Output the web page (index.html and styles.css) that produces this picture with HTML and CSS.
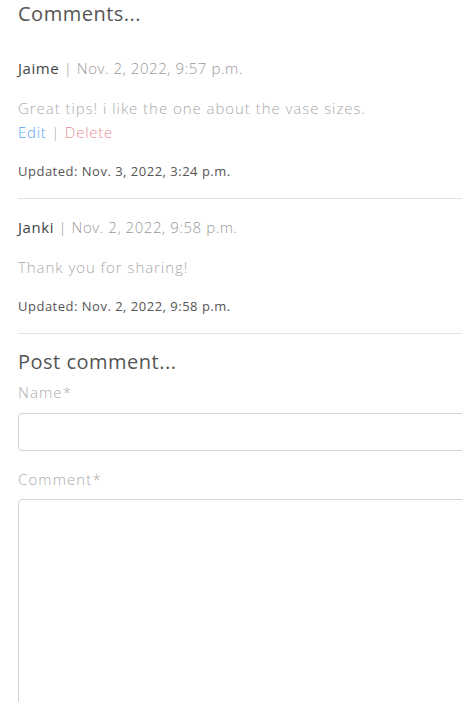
FILE: index.html
```html
<!DOCTYPE html>
<html lang="en">
<head>
<meta charset="utf-8">
<title>Comments</title>
<link rel="stylesheet" href="styles.css">
</head>
<body>
<div class="page">
  <h3 class="section-title">Comments...</h3>
  <div class="comments">
    <div class="comment">
      <p class="comment-meta"><span class="author">Jaime</span> | Nov. 2, 2022, 9:57 p.m.</p>
      <div class="comment-body">
        <p class="comment-text">Great tips! i like the one about the vase sizes.</p>
        <p class="comment-actions"><a class="edit" href="#">Edit</a> | <a class="delete" href="#">Delete</a></p>
      </div>
      <p class="updated">Updated: Nov. 3, 2022, 3:24 p.m.</p>
    </div>
    <hr class="divider">
    <div class="comment">
      <p class="comment-meta"><span class="author">Janki</span> | Nov. 2, 2022, 9:58 p.m.</p>
      <div class="comment-body">
        <p class="comment-text">Thank you for sharing!</p>
      </div>
      <p class="updated">Updated: Nov. 2, 2022, 9:58 p.m.</p>
    </div>
    <hr class="divider">
  </div>
  <form class="comment-form">
    <h3 class="section-title form-title">Post comment...</h3>
    <label class="field-label" for="name">Name*</label>
    <input class="field-input" id="name" type="text">
    <label class="field-label comment-label" for="body">Comment*</label>
    <textarea class="field-input field-textarea" id="body"></textarea>
  </form>
</div>
</body>
</html>
```
FILE: styles.css
```css
html, body {
  margin: 0;
  padding: 0;
  background: #fff;
  overflow: hidden;
}
body {
  font-family: "Open Sans", "DejaVu Sans", sans-serif;
  font-weight: 300;
  font-size: 15px;
  letter-spacing: 0.75px;
  color: #999;
}
.page {
  width: 480px;
  padding-left: 18px;
  box-sizing: border-box;
}
p { margin: 0; }
.section-title {
  margin: 0;
  font-size: 20px;
  line-height: 28px;
  font-weight: 400;
  letter-spacing: 0.5px;
  color: #555;
}
.comments {
  margin-top: 28px;
}
.comment-meta {
  line-height: 24px;
  letter-spacing: 0.55px;
  color: #999;
}
.author {
  font-weight: 400;
  color: #444;
}
.comment-body {
  margin-top: 16px;
}
.comment-text {
  line-height: 24px;
  letter-spacing: 0.95px;
  color: #aaa;
}
.comment-actions {
  line-height: 24px;
  color: #aaa;
}
.edit { color: #5aa6f4; text-decoration: none; }
.delete { color: #ea8f9a; text-decoration: none; }
.updated {
  margin-top: 17px;
  font-size: 13px;
  line-height: 20px;
  font-weight: 400;
  letter-spacing: 0.5px;
  color: #555;
}
.divider {
  width: 444px;
  margin: 17px 0 16px 0;
  border: 0;
  border-top: 1px solid #e2e2e2;
  height: 0;
}
.comment-form {
  display: flex;
  flex-direction: column;
  align-items: flex-start;
}
.form-title {
  margin-top: -3px;
  line-height: 30px;
}
.field-label {
  margin-top: 3px;
  line-height: 24px;
  letter-spacing: 1.1px;
  color: #aaa;
}
.field-input {
  display: block;
  box-sizing: border-box;
  width: 470px;
  height: 38px;
  margin-top: 9px;
  border: 1px solid #ced4da;
  border-radius: 4px;
  background: #fff;
  font: inherit;
}
.comment-label {
  margin-top: 16px;
}
.field-textarea {
  height: 260px;
  margin-top: 8px;
  resize: none;
}
```
